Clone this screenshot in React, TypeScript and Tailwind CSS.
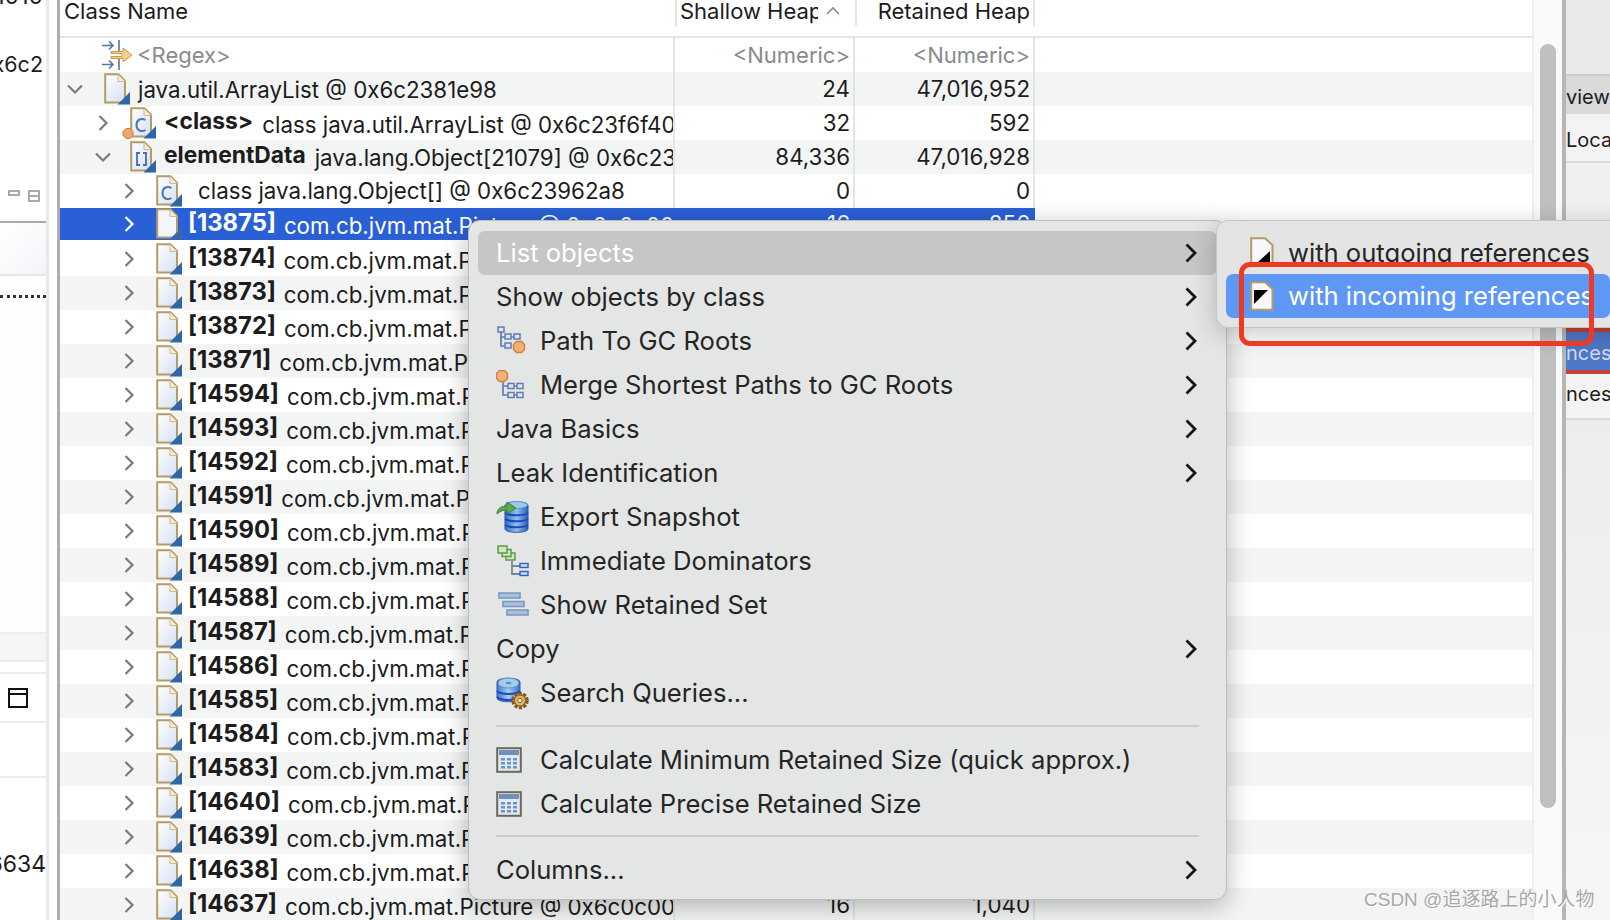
import React from 'react';

const FONT = 'font-[Inter,"Noto_Sans",sans-serif]';

const Chevron: React.FC<{ open?: boolean; selected?: boolean }> = ({ open, selected }) => (
  <svg width="16" height="16" viewBox="0 0 16 16" className="shrink-0" fill="none" stroke={selected ? '#ffffff' : '#7b7b7b'} strokeWidth="2.2">
    {open ? <path d="M1 4.5 8 11.5 15 4.5" /> : <path d="M4.5 1 11.5 8 4.5 15" />}
  </svg>
);

const PageIcon: React.FC<{ kind?: 'c' | 'arr'; dot?: boolean; selected?: boolean }> = ({ kind, dot, selected }) => (
  <svg width="34" height="32" viewBox="-8 0 34 32" className="shrink-0 -ml-[8px]">
    <defs>
      <linearGradient id="pageFill" x1="0" y1="0" x2="1" y2="1">
        <stop offset="0" stopColor="#ffffff" />
        <stop offset="1" stopColor="#d5dff3" />
      </linearGradient>
    </defs>
    <path d="M1.2 1.2H14.5L21 8V29.5H1.2Z" fill={selected ? '#f3f5fb' : 'url(#pageFill)'} stroke="#b39c66" strokeWidth="2" />
    <path d="M14 1.5V8.5H21" fill="#f5ecd2" stroke="#cdbb8a" strokeWidth="1" />
    {kind === 'c' && <path d="M15.500 13C11.500 10.500 6.500 12.500 6.500 18C6.500 23.500 11.500 25.500 15.500 23" fill="none" stroke="#4a78b8" strokeWidth="2" />}
    {kind === 'arr' && <path d="M10 12H7V24H10M13 12H16V24H13" fill="none" stroke="#3f6fb0" strokeWidth="1.8" />}
    <path d="M26 19V31.5H13.5Z" fill={selected ? '#3b66aa' : '#2f66a8'} />
    {dot && <path d="M-4 21.5H0L3 24.5V28.5L0 31.5H-4L-7 28.5V24.5Z" fill="#eda66a" stroke="#cf7a3a" strokeWidth="1" />}
  </svg>
);

const RegexIcon = () => (
  <svg width="31" height="30" viewBox="0 0 31 30" className="shrink-0">
    <path d="M0 5.5H11M7 1.5 11 5.5 7 9.5" fill="none" stroke="#55759c" strokeWidth="1.6" />
    <path d="M17 0V11" stroke="#55759c" strokeWidth="1.6" />
    <path d="M9 11.5H21V8L30 15L21 22V18.5H9V16.5H20V13.5H9Z" fill="#f2cf8c" stroke="#c89a46" strokeWidth="1" />
    <path d="M0 24.5H11M7 20.5 11 24.5 7 28.5" fill="none" stroke="#55759c" strokeWidth="1.6" />
    <path d="M17 19V30" stroke="#55759c" strokeWidth="1.6" />
  </svg>
);

const Octagon: React.FC<{ x: number; y: number }> = ({ x, y }) => (
  <path d={`M${x - 2.5} ${y - 5.5}H${x + 2.5}L${x + 5.5} ${y - 2.5}V${y + 2.5}L${x + 2.5} ${y + 5.5}H${x - 2.5}L${x - 5.5} ${y + 2.5}V${y - 2.5}Z`} fill="#f0b077" stroke="#cf8238" strokeWidth="1.4" />
);

const TreeBox: React.FC<{ x: number; y: number }> = ({ x, y }) => (
  <rect x={x} y={y} width="6" height="5" fill="#dfe6f2" stroke="#5f7cb0" strokeWidth="1.5" />
);

const PathIcon = () => (
  <svg width="30" height="30" viewBox="0 0 30 30">
    <path d="M5 5V20H12M5 11H12M15 11H20" fill="none" stroke="#5f7cb0" strokeWidth="1.7" />
    <TreeBox x={2} y={1} /><TreeBox x={9} y={8} /><TreeBox x={18} y={8} /><TreeBox x={9} y={17} />
    <Octagon x={23} y={21} />
  </svg>
);

const MergeIcon = () => (
  <svg width="30" height="30" viewBox="0 0 30 30">
    <path d="M7 9V25H13M7 16H13M17 16H22M17 25H22" fill="none" stroke="#5f7cb0" strokeWidth="1.7" />
    <TreeBox x={12} y={13.5} /><TreeBox x={21} y={13.5} /><TreeBox x={12} y={22.5} /><TreeBox x={21} y={22.5} />
    <Octagon x={6} y={6} />
  </svg>
);

const ExportIcon = () => (
  <svg width="34" height="34" viewBox="0 0 34 34">
    <defs>
      <linearGradient id="dbFill" x1="0" y1="0" x2="1" y2="0">
        <stop offset="0" stopColor="#2f6fd0" />
        <stop offset="0.5" stopColor="#8fc0ea" />
        <stop offset="1" stopColor="#2a5cc0" />
      </linearGradient>
    </defs>
    <path d="M9 5C9 1 32 1 32 5V29C32 33.500 9 33.500 9 29Z" fill="url(#dbFill)" stroke="#2b55b0" />
    <ellipse cx="20.500" cy="5" rx="11" ry="3.500" fill="#9fc9ea" stroke="#5b8fcf" />
    <path d="M9 13C13 16 28 16 32 13M9 19C13 22 28 22 32 19M9 25C13 28 28 28 32 25" fill="none" stroke="#1d49b5" strokeWidth="2" />
    <path d="M1 14C1 8 6 6 11 6V2L20 8L11 14V10C7 10 4 11 1 14Z" fill="#5fa84a" stroke="#3e8232" />
  </svg>
);

const DominatorIcon = () => (
  <svg width="34" height="34" viewBox="0 0 34 34">
    <g fill="#cfe6bf" stroke="#5e9c4c" strokeWidth="1.5">
      <rect x="10" y="9" width="9" height="7" />
      <rect x="6" y="5.500" width="9" height="7" />
      <rect x="2" y="2" width="9" height="7" />
    </g>
    <path d="M16 17V30H24M16 22H24" fill="none" stroke="#78849e" strokeWidth="1.8" />
    <g fill="#c8d9f2" stroke="#2f62c4" strokeWidth="1.4">
      <rect x="24" y="19.500" width="8" height="4" />
      <rect x="24" y="27.500" width="8" height="4" />
    </g>
  </svg>
);

const RetainedIcon = () => (
  <svg width="34" height="28" viewBox="0 0 34 28">
    <g fill="#a9c0dc" stroke="#7c9ac0" strokeWidth="1.6">
      <rect x="3" y="2" width="21" height="5" />
      <rect x="7" y="10.500" width="21" height="5" />
      <rect x="11" y="19" width="21" height="5" />
    </g>
  </svg>
);

const SearchIcon = () => (
  <svg width="34" height="34" viewBox="0 0 34 34">
    <defs>
      <linearGradient id="dbFill2" x1="0" y1="0" x2="1" y2="0">
        <stop offset="0" stopColor="#3b78d8" />
        <stop offset="0.5" stopColor="#a8cdec" />
        <stop offset="1" stopColor="#3b6cc8" />
      </linearGradient>
    </defs>
    <path d="M1 6C1 1 24 1 24 6V22C24 27 1 27 1 22Z" fill="url(#dbFill2)" stroke="#2b55b0" />
    <ellipse cx="12.500" cy="7" rx="10.500" ry="5" fill="#a6cbe8" stroke="#5b8fcf" />
    <ellipse cx="12.500" cy="7" rx="3" ry="1.300" fill="#5f8fc9" />
    <path d="M1 15C5 19 20 19 24 15M1 21C5 25 20 25 24 21" fill="none" stroke="#1d49b5" strokeWidth="1.8" />
    <circle cx="24" cy="24.500" r="7" fill="#d89b3e" stroke="#7d5a2a" strokeWidth="3.500" strokeDasharray="3 1.500" />
    <circle cx="24" cy="24.500" r="5.500" fill="#e3b25c" stroke="#8a6228" strokeWidth="1" />
    <circle cx="24" cy="24.500" r="2.200" fill="#efefef" stroke="#8a6228" strokeWidth="1" />
  </svg>
);

const CalcIcon = () => (
  <svg width="26" height="26" viewBox="0 0 26 26">
    <rect x="1.200" y="1.200" width="23.600" height="23.600" fill="#dfe8f4" stroke="#6d6a52" strokeWidth="2" />
    <rect x="3" y="3" width="20" height="5" fill="#6e90ba" />
    <g fill="#6f93c6">
      <rect x="5" y="11" width="4" height="2.500" /><rect x="11" y="11" width="4" height="2.500" /><rect x="17" y="11" width="4" height="2.500" />
      <rect x="5" y="15" width="4" height="2.500" /><rect x="11" y="15" width="4" height="2.500" /><rect x="17" y="15" width="4" height="2.500" />
      <rect x="5" y="19" width="4" height="2.500" /><rect x="11" y="19" width="4" height="2.500" /><rect x="17" y="19" width="4" height="2.500" />
    </g>
  </svg>
);

const RefIcon: React.FC<{ incoming?: boolean }> = ({ incoming }) => (
  <svg width="24" height="30" viewBox="0 0 24 30" className="shrink-0">
    <path d="M1.200 1.200H15L22.500 8V28.800H1.200Z" fill="#f7f8fd" stroke="#b39c66" strokeWidth="2" />
    {incoming ? <path d="M4 9H18L4 23Z" fill="#000000" /> : <path d="M20 14V26H7Z" fill="#000000" />}
  </svg>
);

type TreeRow = {
  indent: string;
  gap: string;
  iconGap?: string;
  open?: boolean;
  icon?: 'c' | 'arr';
  dot?: boolean;
  label?: string;
  labelClass?: string;
  text: string;
  textClass?: string;
  shallow: string;
  retained: string;
};

const PICTURE = 'com.cb.jvm.mat.Picture @ 0x6c0c0011';
const pictureRow = (label: string): TreeRow => ({
  indent: 'pl-[61px]',
  gap: 'w-[19px]',
  iconGap: 'w-[6px]',
  label: `[${label}]`,
  labelClass: 'text-[23.8px] mr-[8px] mb-[2px]',
  text: PICTURE,
  textClass: 'pt-[3px]',
  shallow: '16',
  retained: '1,040',
});

const WORD_LABEL = 'text-[22.8px] mr-[9px] mb-[3px]';

const rows: TreeRow[] = [
  { indent: 'pl-[7px]', gap: 'w-[21px]', open: true, text: 'java.util.ArrayList @ 0x6c2381e98', textClass: 'pt-[1px]', shallow: '24', retained: '47,016,952' },
  { indent: 'pl-[35px]', gap: 'w-[19px]', icon: 'c', dot: true, label: '<class>', labelClass: WORD_LABEL, text: 'class java.util.ArrayList @ 0x6c23f6f40', textClass: 'pt-[3px]', shallow: '32', retained: '592' },
  { indent: 'pl-[35px]', gap: 'w-[19px]', open: true, icon: 'arr', label: 'elementData', labelClass: WORD_LABEL, text: 'java.lang.Object[21079] @ 0x6c23962a8', textClass: 'pt-[1px]', shallow: '84,336', retained: '47,016,928' },
  { indent: 'pl-[61px]', gap: 'w-[19px]', icon: 'c', text: 'class java.lang.Object[] @ 0x6c23962a8', textClass: 'ml-[8px]', shallow: '0', retained: '0' },
  { ...pictureRow('13875'), shallow: '16', retained: '856' },
  ...['13874', '13873', '13872', '13871', '14594', '14593', '14592', '14591', '14590', '14589', '14588', '14587', '14586', '14585', '14584', '14583', '14640', '14639', '14638', '14637'].map(pictureRow),
];

const SELECTED = 4;

const TableRow: React.FC<{ row: TreeRow; index: number }> = ({ row, index }) => {
  const selected = index === SELECTED;
  const stripe = index % 2 === 0 ? 'bg-[#f3f4f4]' : 'bg-white';
  const cell = selected ? 'bg-[#2a60d6] text-white h-[32px] self-start border-[#2a60d6]' : 'text-[#1c1c1c] h-[34px] border-[#e4e4e4]';
  return (
    <div className={`flex h-[34px] shrink-0 text-[22.3px] ${selected ? 'bg-white' : stripe}`}>
      <div className={`w-[615px] flex items-center overflow-hidden whitespace-nowrap border-r-2 ${row.indent} ${cell}`}>
        <Chevron open={row.open} selected={selected} />
        <span className={`${row.gap} shrink-0`} />
        <PageIcon kind={row.icon} dot={row.dot} selected={selected} />
        <span className={`${row.iconGap ?? 'w-[8px]'} shrink-0`} />
        {row.label && <span className={`font-bold ${row.labelClass}`}>{row.label}</span>}
        <span className={row.textClass}>{row.text}</span>
      </div>
      <div className={`w-[180px] flex items-center justify-end pr-[3px] border-r-2 ${cell}`}>{row.shallow}</div>
      <div className={`w-[180px] flex items-center justify-end pr-[3px] border-r-2 ${cell}`}>{row.retained}</div>
    </div>
  );
};

type MenuEntry = { label: string; icon?: React.ReactNode; arrow?: boolean; active?: boolean };

const MenuChevron = () => (
  <svg width="12" height="20" viewBox="0 0 12 20" fill="none" stroke="#141414" strokeWidth="2.800">
    <path d="M1.500 1.500 10 10 1.500 18.500" />
  </svg>
);

const MenuItem: React.FC<{ item: MenuEntry }> = ({ item }) => (
  <div className={`h-[44px] flex items-center rounded-[7px] pr-[20px] pl-[18px] ${item.active ? 'bg-[#c6c6c6] text-white' : 'text-[#252525]'}`}>
    {item.icon && <span className="w-[44px] shrink-0 flex items-center">{item.icon}</span>}
    <span className="flex-1 whitespace-nowrap">{item.label}</span>
    {item.arrow && <MenuChevron />}
  </div>
);

const groupA: MenuEntry[] = [
  { label: 'List objects', arrow: true, active: true },
  { label: 'Show objects by class', arrow: true },
  { label: 'Path To GC Roots', icon: <PathIcon />, arrow: true },
  { label: 'Merge Shortest Paths to GC Roots', icon: <MergeIcon />, arrow: true },
  { label: 'Java Basics', arrow: true },
  { label: 'Leak Identification', arrow: true },
  { label: 'Export Snapshot', icon: <ExportIcon /> },
  { label: 'Immediate Dominators', icon: <DominatorIcon /> },
  { label: 'Show Retained Set', icon: <RetainedIcon /> },
  { label: 'Copy', arrow: true },
  { label: 'Search Queries...', icon: <SearchIcon /> },
];

const groupB: MenuEntry[] = [
  { label: 'Calculate Minimum Retained Size (quick approx.)', icon: <CalcIcon /> },
  { label: 'Calculate Precise Retained Size', icon: <CalcIcon /> },
];

const LeftPanel = () => (
  <div className="w-[49px] shrink-0 flex flex-col border-r-[3px] border-[#e9e9e9] text-[23px] text-[#1c1c1c] overflow-hidden">
    <div className="h-[4px] shrink-0 flex items-end justify-end pr-[3px] overflow-hidden"><span className="leading-[16px]">1010</span></div>
    <div className="h-[217px] shrink-0 flex flex-col">
      <div className="h-[78px] flex items-center justify-end pr-[3px] whitespace-nowrap overflow-hidden pt-[42px] text-[21.5px]"><span>x6c2</span></div>
      <div className="mt-[108px] flex items-start gap-[8px] pl-[8px]">
        <span className="w-[12px] h-[6px] border-2 border-[#a9a9a9]" />
        <span className="w-[12px] h-[12px] border-2 border-[#a9a9a9] flex items-center"><span className="w-full h-[2px] bg-[#a9a9a9]" /></span>
      </div>
    </div>
    <div className="h-[55px] shrink-0 border-t-2 border-[#a9a9a9] border-b-2 border-b-[#e6e6e6] bg-linear-to-br from-white to-[#f4f5fa]" />
    <div className="h-[356px] shrink-0 bg-[#fdfdfd] pt-[19px]">
      <div className="border-t-[3px] border-dotted border-[#333333]" />
    </div>
    <div className="h-[30px] shrink-0 bg-[#f5f5f5] border-y-2 border-[#ececec]" />
    <div className="h-[10px] shrink-0" />
    <div className="h-[51px] shrink-0 border-y-2 border-[#ececec] flex items-center pl-[8px]">
      <span className="w-[20px] h-[20px] border-2 border-[#111111] flex flex-col"><span className="h-[2px] mt-[3px] bg-[#111111]" /></span>
    </div>
    <div className="h-[55px] shrink-0 border-b-2 border-[#ececec]" />
    <div className="h-[103px] shrink-0 flex items-end justify-end whitespace-nowrap"><span>6634</span></div>
  </div>
);

const RightPanel = () => (
  <div className="flex-1 min-w-0 bg-[#f3f3f3] border-l-4 border-[#b6b6b6] text-[20px] text-[#1c1c1c] flex flex-col overflow-hidden whitespace-nowrap">
    <div className="h-[76px] shrink-0 border-b-2 border-[#cdcdcd] bg-[#e9e9e9]" />
    <div className="h-[38px] shrink-0 bg-[#d9d9d9] flex items-center pt-[4px]">view</div>
    <div className="h-[49px] shrink-0 border-b-2 border-[#dcdcdc] flex items-center pt-[4px]">Local</div>
    <div className="h-[165px] shrink-0 bg-[#f0f0f0]" />
    <div className="h-[46px] shrink-0 bg-[#4f78c8] border-y-4 border-[#c5413a] text-[#cfdcf5] flex items-center pt-[3px]">nces</div>
    <div className="h-[46px] shrink-0 border-b-2 border-[#d8d8d8] flex items-center pb-[4px]">nces</div>
    <div className="flex-1 bg-linear-to-b from-[#ececec] to-[#f6f6f6]" />
  </div>
);

const App: React.FC = () => (
  <div className={`relative w-[1610px] h-[920px] flex bg-white overflow-hidden ${FONT}`}>
    <LeftPanel />
    <div className="w-[8px] shrink-0 bg-white" />
    <div className="w-[1505px] shrink-0 flex border-l-[3px] border-[#adadad]">
      <div className="w-[1472px] shrink-0 flex flex-col overflow-hidden">
        <div className="h-[38px] shrink-0 flex border-b-2 border-[#e4e4e4] text-[22px] text-[#1c1c1c] bg-white">
          <div className="w-[615px] pl-[4px] leading-[22px] h-[26px]">Class Name</div>
          <div className="w-[180px] h-[26px] border-l-2 border-[#e4e4e4] flex justify-between pl-[3px] pr-[15px] leading-[22px]">
            <span className="w-[138px] overflow-hidden whitespace-nowrap">Shallow Heap</span>
            <svg width="14" height="22" viewBox="0 0 14 22" fill="none" stroke="#8d8d8d" strokeWidth="1.600"><path d="M1 14 7 8 13 14" /></svg>
          </div>
          <div className="w-[180px] h-[26px] border-x-2 border-[#e4e4e4] text-right pr-[3px] leading-[22px]">Retained Heap</div>
        </div>
        <div className="h-[34px] shrink-0 flex text-[22px] text-[#8a8a8a]">
          <div className="w-[615px] flex items-center pl-[42px] gap-[4px] border-r-2 border-[#e4e4e4]"><RegexIcon />&lt;Regex&gt;</div>
          <div className="w-[180px] flex items-center justify-end pr-[3px] border-r-2 border-[#e4e4e4]">&lt;Numeric&gt;</div>
          <div className="w-[180px] flex items-center justify-end pr-[3px] border-r-2 border-[#e4e4e4]">&lt;Numeric&gt;</div>
        </div>
        {rows.map((row, i) => <TableRow key={i} row={row} index={i} />)}
      </div>
      <div className="w-[30px] shrink-0 bg-[#fafafa] border-l-2 border-[#eeeeee] pt-[6px] pl-[6px]">
        <div className="w-[16px] h-[764px] rounded-full bg-[#bfbfbf] mt-[38px]" />
      </div>
    </div>
    <RightPanel />

    {/* context menu */}
    <div className="absolute left-[468px] top-[220px] w-[759px] h-[680px] bg-[#e4e5e5] rounded-[12px] border border-[#bdbdbd] shadow-[0_6px_26px_rgba(0,0,0,0.28)] pt-[10px] px-[9px] text-[25.6px]">
      {groupA.map(item => <MenuItem key={item.label} item={item} />)}
      <div className="h-[2px] bg-[#cccccc] mt-[10px] mb-[11px] mx-[18px]" />
      {groupB.map(item => <MenuItem key={item.label} item={item} />)}
      <div className="h-[2px] bg-[#cccccc] mt-[9px] mb-[11px] mx-[18px]" />
      <MenuItem item={{ label: 'Columns...', arrow: true }} />
    </div>

    {/* submenu */}
    <div className="absolute left-[1216px] top-[220px] w-[420px] h-[108px] bg-[#e4e4e4] rounded-[12px] border border-[#c4c4c4] shadow-[0_6px_26px_rgba(0,0,0,0.22)] pt-[9px] pl-[9px] text-[25.6px]">
      <div className="h-[36px] overflow-hidden flex items-start pl-[24px] gap-[14px] text-[#252525] pt-[7px] whitespace-nowrap">
        <RefIcon />
        <span className="leading-[32px]">with outgoing references</span>
      </div>
      <div className="mt-[8px] w-[384px] h-[44px] rounded-[7px] bg-[#5f97f7] text-white flex items-center pl-[24px] gap-[14px] whitespace-nowrap overflow-hidden">
        <RefIcon incoming />
        <span className="pt-[1px]">with incoming references</span>
      </div>
    </div>

    {/* annotation drawn on the screenshot */}
    <div className="absolute left-[1239px] top-[262px] w-[355px] h-[84px] border-[5px] border-[#ee3a25] rounded-[11px]" />

    <div className="absolute left-[1364px] top-[888px] text-[19px] leading-[24px] text-[#a8a8a8] whitespace-nowrap font-['Liberation_Sans','Noto_Sans_CJK_SC',sans-serif] [text-shadow:1px_1px_0_#ffffff]">
      CSDN @追逐路上的小人物
    </div>
  </div>
);

export default App;
